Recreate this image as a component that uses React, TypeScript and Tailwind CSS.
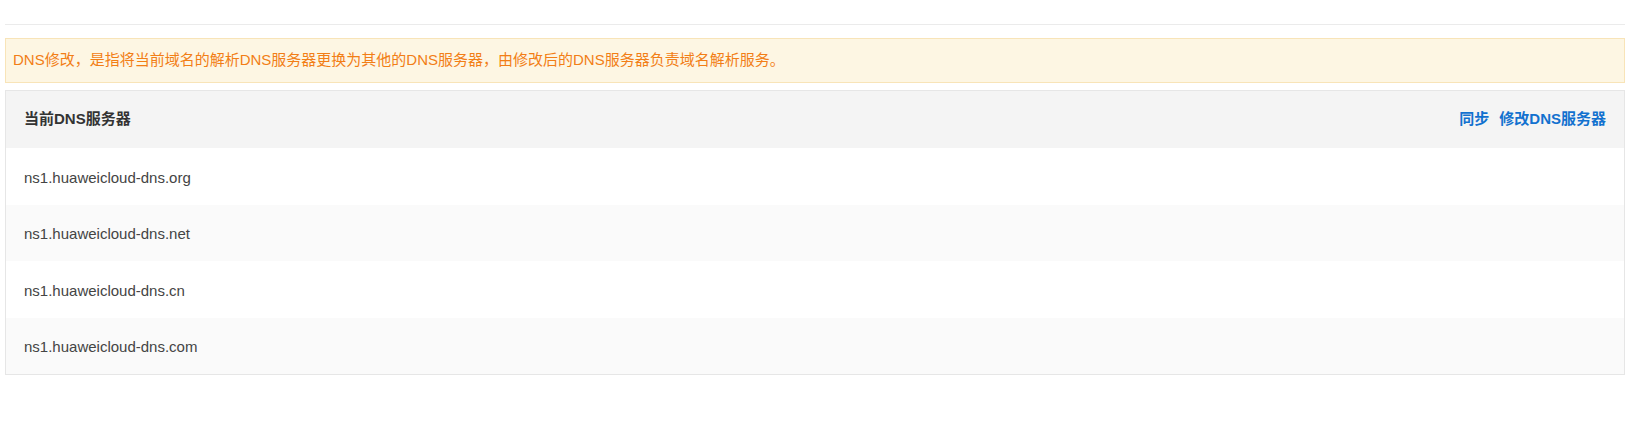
import React from "react";

const FONT = "font-['Liberation_Sans','Noto_Sans_CJK_SC',sans-serif]";

const rows = [
  "ns1.huaweicloud-dns.org",
  "ns1.huaweicloud-dns.net",
  "ns1.huaweicloud-dns.cn",
  "ns1.huaweicloud-dns.com",
];

export default function App() {
  return (
    <div className={`${FONT} bg-white w-[1644px] h-[421px] pl-[5px] pt-[24px]`}>
      <div className="w-[1620px]">
        <div className="h-px bg-[#ebebeb]" />
        <div className="mt-[13px] h-[45px] border border-[#f8e4b8] bg-[#fdf6e3] flex items-center pl-[7px] text-[15px] text-[#f27e16]">
          DNS修改，是指将当前域名的解析DNS服务器更换为其他的DNS服务器，由修改后的DNS服务器负责域名解析服务。
        </div>
        <div className="mt-[7px] border border-[#e6e6e6]">
          <div className="h-[57px] bg-[#f4f4f4] flex items-center justify-between pl-[18px] pr-[18px]">
            <span className="text-[15px] font-bold text-[#333333]">当前DNS服务器</span>
            <div className="flex items-center gap-[10px] text-[15px] font-bold text-[#1271cf]">
              <span>同步</span>
              <span>修改DNS服务器</span>
            </div>
          </div>
          {rows.map((r, i) => (
            <div
              key={r}
              className={`h-[56.5px] flex items-center pl-[18px] pt-[3px] text-[15px] text-[#444444] ${
                i % 2 === 1 ? "bg-[#fafafa]" : "bg-white"
              }`}
            >
              {r}
            </div>
          ))}
        </div>
      </div>
    </div>
  );
}
